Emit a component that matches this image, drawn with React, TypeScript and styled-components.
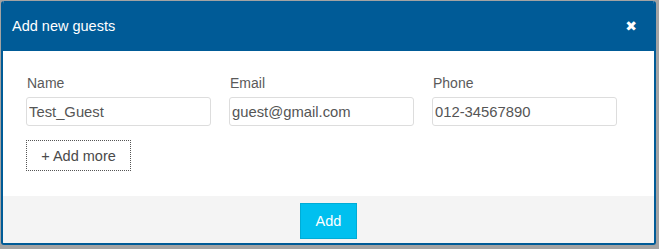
import React, { useState } from 'react';
import styled, { createGlobalStyle } from 'styled-components';

const GlobalStyle = createGlobalStyle`
  html, body {
    margin: 0;
    padding: 0;
    background: #a3a3a3;
    font-family: 'Liberation Sans', Arial, sans-serif;
  }
`;

const Backdrop = styled.div`
  width: 659px;
  height: 249px;
  box-sizing: border-box;
  padding: 1px 3px 4px 1px;
  background: #a3a3a3;
`;

const Modal = styled.div`
  display: flex;
  flex-direction: column;
  height: 100%;
  box-sizing: border-box;
  border: 2px solid #005b97;
  border-top-width: 0;
  border-radius: 3px;
  overflow: hidden;
  background: #fff;
`;

const Header = styled.div`
  display: flex;
  align-items: center;
  justify-content: space-between;
  height: 50px;
  padding: 0 17px 0 9px;
  background: #005b97;
  color: #fff;
`;

const Title = styled.h4`
  margin: 0;
  font-size: 14.5px;
  font-weight: normal;
`;

const CloseButton = styled.button`
  border: none;
  background: none;
  padding: 0;
  color: #fff;
  font-size: 14px;
  line-height: 1;
  cursor: pointer;
  font-family: 'DejaVu Sans', sans-serif;
`;

const Body = styled.div`
  height: 145px;
  box-sizing: border-box;
  padding: 24px 0 0 23px;
`;

const FieldRow = styled.div`
  display: grid;
  grid-template-columns: repeat(3, 185px);
  column-gap: 18px;
`;

const Field = styled.label`
  display: flex;
  flex-direction: column;
`;

const Label = styled.span`
  font-size: 14px;
  line-height: 16px;
  color: #5a5a5a;
  padding-left: 1px;
  margin-bottom: 6px;
`;

const Input = styled.input`
  height: 29px;
  box-sizing: border-box;
  border: 1px solid #ddd;
  border-radius: 3px;
  padding: 0 2px;
  font-family: 'Liberation Sans', Arial, sans-serif;
  font-size: 14.8px;
  color: #555;
  outline: none;
`;

const AddMoreButton = styled.button`
  margin-top: 14px;
  width: 105px;
  height: 31px;
  border: 1px dotted #555;
  background: #fff;
  font-family: 'Liberation Sans', Arial, sans-serif;
  font-size: 14.5px;
  color: #4a4a4a;
  cursor: pointer;
`;

const Footer = styled.div`
  flex: 1;
  display: flex;
  justify-content: center;
  padding-top: 7px;
  background: #f4f4f4;
`;

const SubmitButton = styled.button`
  width: 57px;
  height: 36px;
  border: 1px solid #00acd6;
  background: #00c0ef;
  color: #fff;
  font-family: 'Liberation Sans', Arial, sans-serif;
  font-size: 14.5px;
  cursor: pointer;
`;

interface Guest {
  name: string;
  email: string;
  phone: string;
}

const App: React.FC = () => {
  const [guests, setGuests] = useState<Guest[]>([
    { name: 'Test_Guest', email: 'guest@gmail.com', phone: '012-34567890' },
  ]);

  const update = (i: number, key: keyof Guest, value: string) => {
    setGuests(guests.map((g, idx) => (idx === i ? { ...g, [key]: value } : g)));
  };

  return (
    <>
      <GlobalStyle />
      <Backdrop>
        <Modal>
          <Header>
            <Title>Add new guests</Title>
            <CloseButton aria-label="Close">✖</CloseButton>
          </Header>
          <Body>
            {guests.map((g, i) => (
              <FieldRow key={i}>
                <Field>
                  <Label>Name</Label>
                  <Input value={g.name} onChange={e => update(i, 'name', e.target.value)} />
                </Field>
                <Field>
                  <Label>Email</Label>
                  <Input value={g.email} onChange={e => update(i, 'email', e.target.value)} />
                </Field>
                <Field>
                  <Label>Phone</Label>
                  <Input value={g.phone} onChange={e => update(i, 'phone', e.target.value)} />
                </Field>
              </FieldRow>
            ))}
            <AddMoreButton>+ Add more</AddMoreButton>
          </Body>
          <Footer>
            <SubmitButton>Add</SubmitButton>
          </Footer>
        </Modal>
      </Backdrop>
    </>
  );
};

export default App;
